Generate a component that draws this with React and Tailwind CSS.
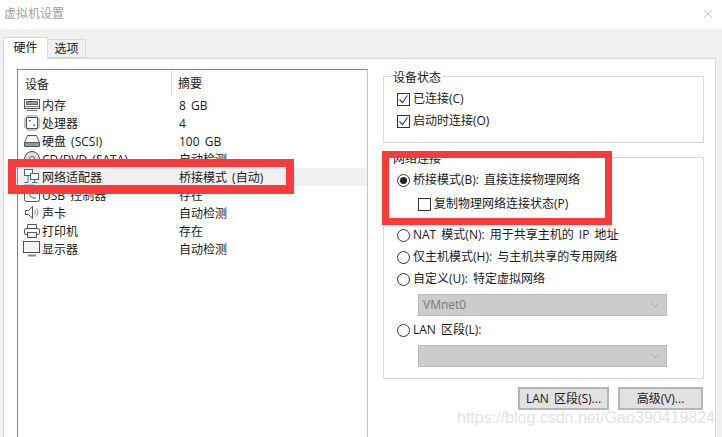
import React from 'react';
import { X, ChevronDown } from 'lucide-react';

const font = { fontFamily: '"Open Sans", "Noto Sans CJK SC", sans-serif' };

const iconProps = {
  width: 18,
  height: 18,
  viewBox: '0 0 18 18',
  fill: 'none',
  stroke: '#555',
  strokeWidth: 1,
  className: 'shrink-0',
};

const MemoryIcon = () => (
  <svg {...iconProps}>
    <rect x="1.5" y="3.5" width="15" height="9" />
    <rect x="3.5" y="5.5" width="11" height="3" fill="#999" stroke="#666" />
    <path d="M2 10.5h14M4 14.5h10" stroke="#777" />
  </svg>
);

const CpuIcon = () => (
  <svg {...iconProps}>
    <rect x="3.5" y="3.5" width="11" height="11" />
    <path d="M5 1v2M7 1v2M9 1v2M11 1v2M13 1v2M5 15v2M7 15v2M9 15v2M11 15v2M13 15v2M1 5h2M1 7h2M1 9h2M1 11h2M1 13h2M15 5h2M15 7h2M15 9h2M15 11h2M15 13h2" stroke="#888" />
    <rect x="6" y="6" width="1.5" height="1.5" fill="#555" stroke="none" />
    <rect x="10.5" y="10.5" width="1.5" height="1.5" fill="#555" stroke="none" />
  </svg>
);

const DiskIcon = () => (
  <svg {...iconProps}>
    <path d="M4.5 3.5h9l3 7v4h-15v-4z" />
    <path d="M1.5 10.5h15" />
    <rect x="2" y="11" width="14" height="3" fill="#999" stroke="none" />
  </svg>
);

const CdIcon = () => (
  <svg {...iconProps}>
    <circle cx="9" cy="9" r="7.5" fill="#ddd" />
    <circle cx="9" cy="9" r="2.5" fill="#fff" />
  </svg>
);

const NetworkIcon = () => (
  <svg {...iconProps}>
    <rect x="1.5" y="1.5" width="8" height="6" stroke="#3c6f96" fill="#fff" />
    <rect x="7.5" y="5.5" width="8" height="6" stroke="#3c6f96" fill="#fff" />
    <path d="M11.5 12v2M9 14.5h5M5 8v6.5H1.5" stroke="#3c6f96" />
    <path d="M1.5 16.5h9" stroke="#8aa8c0" strokeDasharray="1 1" />
  </svg>
);

const UsbIcon = () => (
  <svg {...iconProps}>
    <rect x="1.5" y="1.5" width="15" height="14" rx="2" />
    <path d="M7 4v6l3 2h3" />
  </svg>
);

const SoundIcon = () => (
  <svg {...iconProps}>
    <path d="M2.5 6.5h3l4-4v12l-4-4h-3z" />
    <path d="M11.5 6c1 1.5 1 3.5 0 5M13.5 4.5c1.8 2.5 1.8 5.5 0 8" stroke="#888" />
  </svg>
);

const PrinterIcon = () => (
  <svg {...iconProps}>
    <path d="M4.5 6.5v-4h9v4" />
    <rect x="1.5" y="6.5" width="15" height="6" rx="1.5" />
    <rect x="4.5" y="10.5" width="9" height="5" fill="#fff" />
  </svg>
);

const MonitorIcon = () => (
  <svg {...iconProps}>
    <rect x="0.5" y="1.5" width="16" height="11" fill="#f4f4f4" />
    <path d="M5 15.5h8" strokeWidth="2" stroke="#888" />
  </svg>
);

const rows = [
  { icon: MemoryIcon, name: '内存', value: '8 GB' },
  { icon: CpuIcon, name: '处理器', value: '4' },
  { icon: DiskIcon, name: '硬盘 (SCSI)', value: '100 GB' },
  { icon: CdIcon, name: 'CD/DVD (SATA)', value: '自动检测' },
  { icon: NetworkIcon, name: '网络适配器', value: '桥接模式 (自动)', selected: true },
  { icon: UsbIcon, name: 'USB 控制器', value: '存在' },
  { icon: SoundIcon, name: '声卡', value: '自动检测' },
  { icon: PrinterIcon, name: '打印机', value: '存在' },
  { icon: MonitorIcon, name: '显示器', value: '自动检测' },
];

const Check = ({ checked, label, className = '' }) => (
  <div className={`flex h-[22px] items-center gap-[3px] ${className}`}>
    <span className="flex h-[13px] w-[13px] items-center justify-center border border-[#333] bg-white">
      {checked && (
        <svg width="11" height="11" viewBox="0 0 11 11" fill="none" stroke="#444" strokeWidth="1.2">
          <path d="M1.5 5.5l3 3 5-7" />
        </svg>
      )}
    </span>
    <span>{label}</span>
  </div>
);

const Radio = ({ checked, label, className = '' }) => (
  <div className={`flex h-[22px] items-center gap-[3px] ${className}`}>
    <span className="flex h-[13px] w-[13px] items-center justify-center rounded-full border border-[#333] bg-white">
      {checked && <span className="h-[7px] w-[7px] rounded-full bg-[#222]" />}
    </span>
    <span>{label}</span>
  </div>
);

const DisabledSelect = ({ value, className = '' }) => (
  <div className={`ml-[21px] flex h-[22px] w-[249px] items-center justify-between border border-[#bbb] bg-[#cccccc] pl-[4px] pr-[4px] text-[#777] ${className}`}>
    <span>{value}</span>
    <ChevronDown size={14} strokeWidth={1} color="#888" />
  </div>
);

export default function App() {
  return (
    <div className="relative h-[437px] w-[722px] overflow-hidden bg-[#f0f0f0] text-[12px] leading-none text-[#1a1a1a] [word-spacing:2px]" style={font}>
      <div className="flex h-[29px] items-center justify-between bg-white pb-[2px] pl-[4px] pr-[7px] text-[#a0a0a0]">
        <span>虚拟机设置</span>
        <X size={14} strokeWidth={1} color="#999" />
      </div>

      <div className="ml-[3px] mt-[7px] flex h-[22px] items-end">
        <div className="z-10 -mb-px flex h-[22px] w-[45px] items-center justify-center border border-b-0 border-[#d9d9d9] bg-white pb-[2px]">硬件</div>
        <div className="flex h-[19px] w-[38px] items-center justify-center border border-l-0 border-[#d9d9d9] bg-[#f0f0f0]">选项</div>
      </div>

      <div className="ml-[3px] flex h-[400px] w-[713px] gap-[15px] border border-[#d9d9d9] bg-white pl-[13px] pt-[10px]">
        <div className="h-[400px] w-[351px] border border-[#828790] border-r-[#c4c4c4]">
          <div className="flex h-[26px] items-center">
            <span className="w-[154px] self-stretch border-r border-[#e5e5e5] pl-[7px] pt-[9px]">设备</span>
            <span className="pl-[6px] pt-[1px]">摘要</span>
          </div>
          <div>
            {rows.map((row) => (
              <div key={row.name} className={`flex h-[18px] items-center ${row.selected ? 'bg-[#f0f0f0]' : ''}`}>
                <div className="flex w-[161px] items-center gap-[1px] pl-[5px]">
                  <row.icon />
                  <span className="whitespace-nowrap pt-[1px]">{row.name}</span>
                </div>
                <span className="whitespace-nowrap pt-[1px]">{row.value}</span>
              </div>
            ))}
          </div>
        </div>

        <div className="flex w-[321px] flex-col">
          <div className="relative mt-[7px] h-[67px] border border-[#d9d9d9] pl-[13px] pt-[11px]">
            <span className="absolute -top-[5px] left-[8px] bg-white px-px">设备状态</span>
            <Check checked label="已连接(C)" />
            <Check checked label="启动时连接(O)" />
          </div>

          <div className="relative mt-[14px] h-[222px] border border-[#d9d9d9] pl-[13px] pt-[11px]">
            <span className="absolute -top-[5px] left-[8px] bg-white px-px">网络连接</span>
            <Radio checked label="桥接模式(B): 直接连接物理网络" />
            <Check label="复制物理网络连接状态(P)" className="ml-[21px] mt-[2px]" />
            <Radio label="NAT 模式(N): 用于共享主机的 IP 地址" className="mt-[9px]" />
            <Radio label="仅主机模式(H): 与主机共享的专用网络" />
            <Radio label="自定义(U): 特定虚拟网络" />
            <DisabledSelect value="VMnet0" className="mt-[4px]" />
            <Radio label="LAN 区段(L):" className="mt-[3px]" />
            <DisabledSelect value="" className="mt-[4px]" />
          </div>

          <div className="mr-[1px] mt-[8px] flex justify-end gap-[9px]">
            <div className="flex h-[23px] w-[91px] items-center justify-center border-2 border-[#b5b5b5] bg-[#e1e1e1]">LAN 区段(S)...</div>
            <div className="flex h-[23px] w-[85px] items-center justify-center border-2 border-[#b5b5b5] bg-[#e1e1e1]">高级(V)...</div>
          </div>
        </div>
      </div>

      {/* red annotations and watermark sit on top of the dialog */}
      <div className="absolute left-[8px] top-[159px] h-[35px] w-[286px] border-x-[8px] border-b-[9px] border-t-[8px] border-[#fc3a3a]" />
      <div className="absolute left-[382px] top-[151px] h-[74px] w-[230px] border-[7px] border-[#fc3a3a]" />
      <div className="absolute left-[457px] top-[409px] whitespace-nowrap text-[16px] leading-[18px] text-[#e2e2e2] [word-spacing:0]" style={{ fontFamily: '"Liberation Sans", sans-serif' }}>
        https://blog.csdn.net/Gao390419824
      </div>
    </div>
  );
}
